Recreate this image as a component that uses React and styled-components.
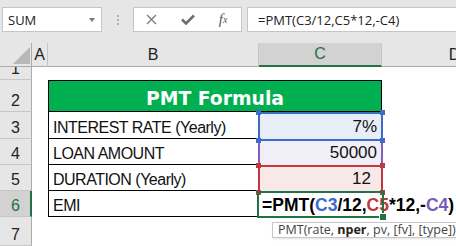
import React from "react";
import styled, { createGlobalStyle } from "styled-components";

const GlobalStyle = createGlobalStyle`
  html, body {
    margin: 0;
    padding: 0;
    background: #ffffff;
  }
  body {
    font-family: "Liberation Sans", Arial, sans-serif;
  }
`;

const green = "#217346";

const tones = {
  blue: { line: "#3c6cc6", fill: "#e8eef8", text: "#3a6bc6", z: 3 },
  purple: { line: "#7f5fbf", fill: "#f0eef7", text: "#7a5bbb", z: 1 },
  red: { line: "#c2383b", fill: "#f9e8e8", text: "#c0383b", z: 2 },
};

const App = () => {
  return (
    <>
      <GlobalStyle />
      <Window>
        <Toolbar>
          <NameBox>
            SUM
            <Caret />
          </NameBox>
          <Grip>
            <i />
            <i />
            <i />
          </Grip>
          <FxBox>
            <FxSlot>
              <svg width="11" height="11" viewBox="0 0 11 11">
                <path d="M1 1 L10 10 M10 1 L1 10" stroke="#7b7b7b" strokeWidth="1.3" fill="none" />
              </svg>
            </FxSlot>
            <FxSlot>
              <svg width="14" height="11" viewBox="0 0 14 11">
                <path d="M1 5.5 L5 9.5 L13 1.5" stroke="#6e6e6e" strokeWidth="2.6" fill="none" />
              </svg>
            </FxSlot>
            <FxSlot>
              <FxText>
                f<sub>x</sub>
              </FxText>
            </FxSlot>
          </FxBox>
          <FormulaBar>=PMT(C3/12,C5*12,-C4)</FormulaBar>
        </Toolbar>

        <Sheet>
          <Corner />
          <ColHead>A</ColHead>
          <ColHead>B</ColHead>
          <ColHead $selected>C</ColHead>
          <ColHead>D</ColHead>

          <RowHead>1</RowHead>
          <Blank />
          <Blank />
          <Blank />
          <Blank />

          <RowHead>2</RowHead>
          <Blank />
          <Title>PMT Formula</Title>
          <Blank />

          <RowHead>3</RowHead>
          <Blank />
          <Label>INTEREST RATE (Yearly)</Label>
          <Value $tone="blue">
            7%
            <Frame $tone="blue">
              <Handle $tone="blue" $at="tl" />
              <Handle $tone="blue" $at="tr" />
              <Handle $tone="blue" $at="bl" />
              <Handle $tone="blue" $at="br" />
            </Frame>
          </Value>
          <Blank />

          <RowHead>4</RowHead>
          <Blank />
          <Label>LOAN AMOUNT</Label>
          <Value $tone="purple">
            50000
            <Frame $tone="purple" />
          </Value>
          <Blank />

          <RowHead>5</RowHead>
          <Blank />
          <Label>DURATION (Yearly)</Label>
          <Value $tone="red" $pad={11}>
            12
            <Frame $tone="red">
              <Handle $tone="red" $at="tl" />
              <Handle $tone="red" $at="tr" />
              <Handle $tone="red" $at="bl" />
              <Handle $tone="red" $at="br" />
            </Frame>
          </Value>
          <Blank />

          <RowHead $selected>6</RowHead>
          <Blank />
          <Label>EMI</Label>
          <Active>
            =PMT(<Ref $tone="blue">C3</Ref>/12,<Ref $tone="red">C5</Ref>*12,-<Ref $tone="purple">C4</Ref>)
            <ActiveFrame>
              <FillHandle />
            </ActiveFrame>
            <Tip>
              PMT(rate, <b>nper</b>, pv, [fv], [type])
            </Tip>
          </Active>
          <Blank />

          <RowHead>7</RowHead>
          <Blank />
          <Blank />
          <Blank />
          <Blank />
        </Sheet>
      </Window>
    </>
  );
};

export default App;

const Window = styled.div`
  width: 456px;
  height: 246px;
  overflow: hidden;
  background: #ffffff;
  display: flex;
  flex-direction: column;
`;

const Toolbar = styled.div`
  flex: 0 0 43px;
  box-sizing: border-box;
  display: flex;
  align-items: flex-start;
  padding: 7px 0 0 2px;
  background: #e6e6e6;
`;

const BarBox = styled.div`
  box-sizing: border-box;
  height: 25px;
  background: #ffffff;
  border: 1px solid #c6c6c6;
  display: flex;
  align-items: center;
  font-family: "Open Sans", "Liberation Sans", sans-serif;
  font-size: 13px;
  color: #222222;
`;

const NameBox = styled(BarBox)`
  position: relative;
  width: 100px;
  padding-left: 5px;
`;

const Caret = styled.span`
  position: absolute;
  right: 6px;
  top: 10px;
  width: 0;
  height: 0;
  border-left: 3.5px solid transparent;
  border-right: 3.5px solid transparent;
  border-top: 4px solid #777777;
`;

const Grip = styled.div`
  width: 31px;
  height: 25px;
  display: flex;
  flex-direction: column;
  align-items: center;
  justify-content: center;
  gap: 2px;

  > i {
    width: 2px;
    height: 2px;
    background: #b3b3b3;
  }
`;

const FxBox = styled(BarBox)`
  width: 109px;
`;

const FxSlot = styled.div`
  width: 36px;
  height: 23px;
  display: flex;
  align-items: center;
  justify-content: center;
`;

const FxText = styled.span`
  font-family: "Liberation Serif", "Times New Roman", serif;
  font-style: italic;
  font-size: 15px;
  color: #5a5a5a;

  > sub {
    font-size: 10px;
    vertical-align: 1px;
  }
`;

const FormulaBar = styled(BarBox)`
  flex: 1;
  margin-left: 5px;
  margin-right: -4px;
  padding-left: 10px;
  white-space: nowrap;
`;

const Sheet = styled.div`
  display: grid;
  grid-template-columns: 32px 16px 211px 123px 146px;
  grid-template-rows: 24px 13px 32px 27px 26px 26px 26px 29px;
  font-family: "Liberation Sans", Arial, sans-serif;
  color: #111111;
`;

const Corner = styled.div`
  position: relative;
  background: #e6e6e6;
  border-right: 1px solid #ababab;
  border-bottom: 1px solid #ababab;

  &::after {
    content: "";
    position: absolute;
    right: 1px;
    bottom: 2px;
    width: 0;
    height: 0;
    border-left: 17px solid transparent;
    border-bottom: 17px solid #b7b7b7;
  }
`;

const ColHead = styled.div`
  box-sizing: border-box;
  display: flex;
  align-items: center;
  justify-content: center;
  font-size: 16px;
  background: ${(p) => (p.$selected ? "#d2d2d2" : "#e6e6e6")};
  color: ${(p) => (p.$selected ? green : "#222222")};
  border-right: 1px solid #c6c6c6;
  border-bottom: ${(p) => (p.$selected ? `2px solid ${green}` : "1px solid #ababab")};
`;

const RowHead = styled.div`
  box-sizing: border-box;
  overflow: hidden;
  display: flex;
  align-items: flex-end;
  justify-content: center;
  font-size: 16px;
  line-height: 20px;
  background: ${(p) => (p.$selected ? "#d2d2d2" : "#e6e6e6")};
  color: ${(p) => (p.$selected ? green : "#222222")};
  border-right: ${(p) => (p.$selected ? `2px solid ${green}` : "1px solid #ababab")};
  border-bottom: 1px solid #c6c6c6;
  padding-left: ${(p) => (p.$selected ? "1px" : "0")};
`;

const Blank = styled.div`
  background: #ffffff;
`;

const Title = styled.div`
  grid-column: span 2;
  box-sizing: border-box;
  display: flex;
  align-items: flex-end;
  justify-content: center;
  padding-bottom: 1px;
  background: #00b050;
  border: 1px solid #000000;
  color: #ffffff;
  font-family: "DejaVu Sans", "Liberation Sans", sans-serif;
  font-weight: bold;
  font-size: 18.8px;
  line-height: 22px;
`;

const Label = styled.div`
  box-sizing: border-box;
  display: flex;
  align-items: flex-end;
  padding-left: 4px;
  border-left: 1px solid #000000;
  border-right: 1px solid #000000;
  border-bottom: 1px solid #000000;
  font-size: 16px;
  letter-spacing: -0.5px;
  line-height: 20px;
  white-space: nowrap;
`;

const Value = styled.div`
  position: relative;
  box-sizing: border-box;
  display: flex;
  align-items: flex-end;
  justify-content: flex-end;
  padding: 0 ${(p) => p.$pad || 5}px 2px 0;
  background: ${(p) => tones[p.$tone].fill};
  font-size: 17px;
  line-height: 20px;
`;

const Frame = styled.div`
  position: absolute;
  inset: 0 -1px -2px -1px;
  border: 2px solid ${(p) => tones[p.$tone].line};
  z-index: ${(p) => tones[p.$tone].z};
  pointer-events: none;
`;

const Handle = styled.span`
  position: absolute;
  width: 5px;
  height: 5px;
  background: ${(p) => tones[p.$tone].line};
  ${(p) => (p.$at[0] === "t" ? "top: -4px;" : "bottom: -4px;")}
  ${(p) => (p.$at[1] === "l" ? "left: -4px;" : "right: -4px;")}
`;

const Active = styled.div`
  position: relative;
  z-index: 5;
  display: flex;
  align-items: flex-end;
  padding: 0 0 2px 3px;
  font-size: 17.5px;
  font-weight: bold;
  line-height: 20px;
  white-space: nowrap;
  color: #000000;
`;

const Ref = styled.span`
  color: ${(p) => tones[p.$tone].text};
`;

const ActiveFrame = styled.div`
  position: absolute;
  inset: 0 -2px -1px -2px;
  border: 2px solid ${green};
  pointer-events: none;
`;

const FillHandle = styled.span`
  position: absolute;
  right: -5px;
  bottom: -5px;
  width: 6px;
  height: 6px;
  background: ${green};
  border: 1px solid #ffffff;
`;

const Tip = styled.div`
  position: absolute;
  top: calc(100% + 5px);
  left: 13px;
  padding: 0 7px 0 5px;
  background: #ffffff;
  border: 1px solid #c6c6c6;
  box-shadow: 1px 1px 2px rgba(0, 0, 0, 0.12);
  font-family: "Open Sans", "Liberation Sans", sans-serif;
  font-weight: normal;
  font-size: 12.5px;
  line-height: 14px;
  color: #444444;

  > b {
    font-weight: bold;
    color: #222222;
  }
`;
